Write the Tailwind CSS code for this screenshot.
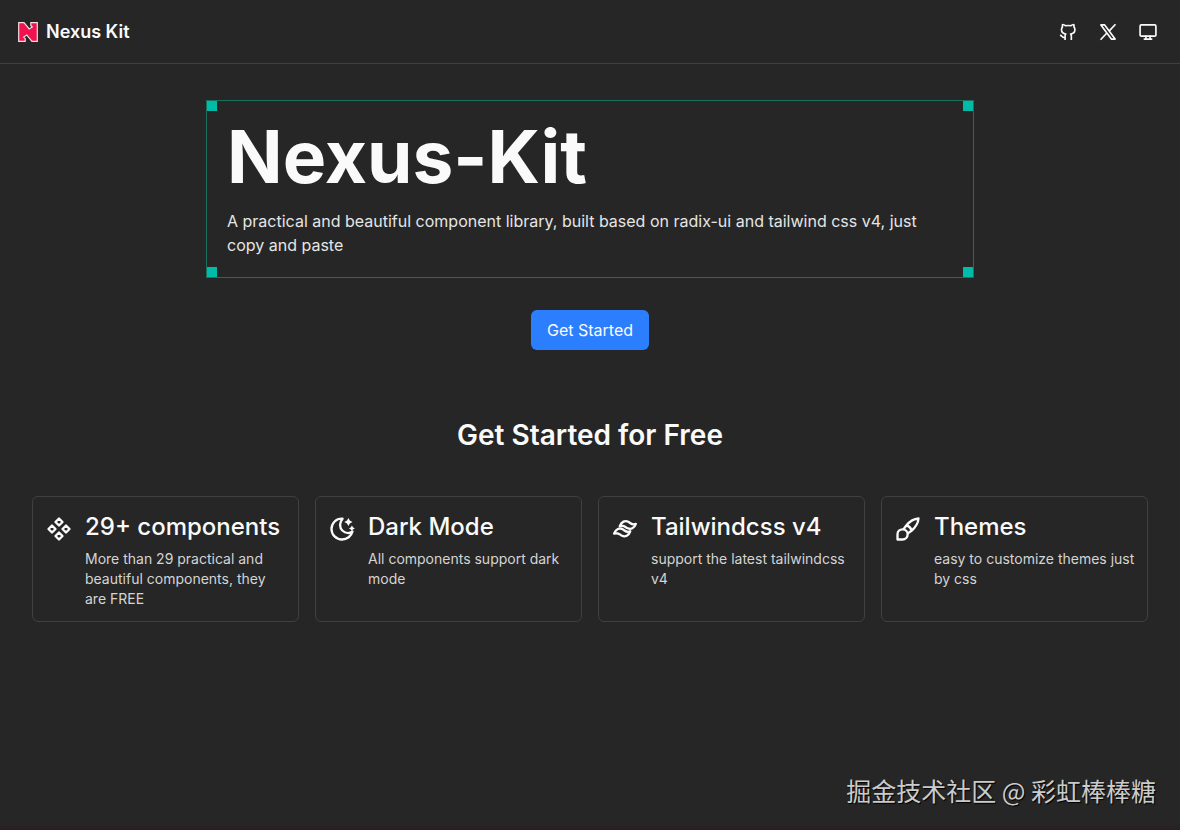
<!DOCTYPE html>
<html lang="en">
  <head>
    <meta charset="UTF-8" />
    <meta name="viewport" content="width=device-width, initial-scale=1.0" />
    <script src="https://cdn.jsdelivr.net/npm/@tailwindcss/browser@4"></script>
    <title>Nexus Kit</title>
  </head>

  <body
    class="relative min-h-screen flex flex-col bg-neutral-800 text-neutral-50 font-['Inter',sans-serif] antialiased border-b-4 border-[#291f25]"
  >
    <header
      class="flex h-16 items-center justify-between border-b border-neutral-700 pl-4 pr-3"
    >
      <a href="#" class="flex items-center gap-1.5 text-lg font-semibold">
        <svg class="size-6" viewBox="0 0 24 24">
          <path
            d="M2.7 2.7H8L13.200 9L16.300 7L14.800 5.500V2.7H21.3V21.3H16L10.800 15L7.700 17L9.200 18.500V21.3H2.7Z"
            fill="#f31250"
            stroke="#f6dce2"
            stroke-width="1.2"
          />
        </svg>
        Nexus Kit
      </a>
      <nav class="flex items-center">
        <a
          href="#"
          aria-label="GitHub"
          class="flex size-10 items-center justify-center"
        >
          <svg
            class="size-5"
            viewBox="0 0 24 24"
            fill="none"
            stroke="currentColor"
            stroke-width="2"
            stroke-linejoin="round"
          >
            <path
              d="M8.500 21.500V16.500C8.500 15.600 8.900 14.900 9.400 14.400C6 14 4.200 12.300 4.200 9C4.200 7.700 4.600 6.700 5.400 5.900C5.100 4.900 5.100 3.900 5.500 3C7 3.100 8.100 3.700 9.200 4.500C11 4.100 13.500 4.100 15.300 4.500C16.400 3.700 17.500 3.100 19 3C19.400 3.900 19.400 4.900 19.100 5.900C19.900 6.700 20.300 7.700 20.300 9C20.300 12.300 18.500 14 15.100 14.400C15.700 14.900 16 15.600 16 16.500V21.500M8.500 18.800C5 19.500 4.900 16.500 2.500 15.500"
            />
          </svg>
        </a>
        <a
          href="#"
          aria-label="X"
          class="flex size-10 items-center justify-center"
        >
          <svg
            class="size-5"
            viewBox="0 0 24 24"
            fill="none"
            stroke="currentColor"
            stroke-width="2"
          >
            <path d="M3.500 3.500H8L20.500 20.500H16Z" stroke-linejoin="round" />
            <path d="M21 2.700L13.300 11M10.700 13.200L3 21.300" />
          </svg>
        </a>
        <button
          type="button"
          aria-label="Theme"
          class="flex size-10 items-center justify-center"
        >
          <svg
            class="size-5"
            viewBox="0 0 24 24"
            fill="none"
            stroke="currentColor"
            stroke-width="2"
            stroke-linecap="round"
          >
            <rect x="2.500" y="3.500" width="19" height="13.500" rx="1.500" />
            <path d="M9.500 17V20M14.500 17V20M7.500 20.500H16.500" />
          </svg>
        </button>
      </nav>
    </header>

    <main class="px-8 pt-9">
      <section class="flex flex-col items-center">
        <div
          class="relative w-full max-w-3xl border border-[#1a705f] p-5"
        >
          <span class="absolute left-0 top-0 size-2.5 bg-[#00bba7]"></span>
          <span class="absolute right-0 top-0 size-2.5 bg-[#00bba7]"></span>
          <span class="absolute left-0 bottom-0 size-2.5 bg-[#00bba7]"></span>
          <span class="absolute right-0 bottom-0 size-2.5 bg-[#00bba7]"></span>
          <h1 class="mb-4 text-[73px] leading-[72px] font-bold">Nexus-Kit</h1>
          <p class="text-base text-neutral-200">
            A practical and beautiful component library, built based on radix-ui
            and tailwind css v4, just copy and paste
          </p>
        </div>
        <button
          type="button"
          class="mt-8 h-10 rounded-md bg-[#2b7fff] px-4 text-base"
        >
          Get Started
        </button>
      </section>

      <section class="pt-16">
        <h2 class="text-center text-[28px] leading-[42px] font-semibold">
          Get Started for Free
        </h2>
        <div class="mt-10 grid grid-cols-4 gap-4">
          <div class="flex gap-3 rounded-md border border-neutral-700 p-3">
            <svg
              class="mt-1.5 size-7 shrink-0"
              viewBox="0 0 24 24"
              fill="none"
              stroke="currentColor"
              stroke-width="2"
              stroke-linejoin="round"
            >
              <path
                d="M12 3L15 6L12 9L9 6ZM6 9L9 12L6 15L3 12ZM18 9L21 12L18 15L15 12ZM12 15L15 18L12 21L9 18Z"
              />
            </svg>
            <div>
              <h3 class="mb-1 text-2xl leading-9 font-medium">29+ components</h3>
              <p class="text-sm text-neutral-300">
                More than 29 practical and beautiful components, they are FREE
              </p>
            </div>
          </div>
          <div class="flex gap-3 rounded-md border border-neutral-700 p-3">
            <svg
              class="mt-1.5 size-7 shrink-0"
              viewBox="0 0 24 24"
              fill="none"
              stroke="currentColor"
              stroke-width="2"
              stroke-linejoin="round"
            >
              <path
                d="M12.500 3.200C7 2.800 3 7 3 12C3 17 7 21 12 21C16.300 21 20 18.200 21 14.200C18.500 16 15 15.800 12.500 13.500C9.600 10.800 9.600 6.600 12.500 3.200Z"
              />
              <path
                d="M17.500 2.500L18.700 4.800L21 6L18.700 7.200L17.500 9.500L16.300 7.200L14 6L16.300 4.800ZM20.500 9L21.400 10.600L23 11.500L21.400 12.400L20.500 14L19.600 12.400L18 11.500L19.600 10.600Z"
                fill="currentColor"
                stroke="none"
              />
            </svg>
            <div>
              <h3 class="mb-1 text-2xl leading-9 font-medium">Dark Mode</h3>
              <p class="text-sm text-neutral-300">
                All components support dark mode
              </p>
            </div>
          </div>
          <div class="flex gap-3 rounded-md border border-neutral-700 p-3">
            <svg
              class="mt-1.5 size-7 shrink-0"
              viewBox="0 0 24 24"
              fill="none"
              stroke="currentColor"
              stroke-width="2"
              stroke-linejoin="round"
            >
              <path
                d="M7.500 9.500C9 5.700 12 4.300 14.800 5.800C17 7 18 9.300 21.300 7.600C20 11.300 17 12.800 14.300 11.400C12 10.200 11 8.300 7.500 9.500Z"
              />
              <path
                d="M2.700 15.900C4.200 12.100 7.200 10.700 10 12.200C12.200 13.400 13.200 15.700 16.500 14C15.200 17.700 12.200 19.200 9.500 17.800C7.200 16.600 6.200 14.700 2.700 15.900Z"
              />
            </svg>
            <div>
              <h3 class="mb-1 text-2xl leading-9 font-medium">Tailwindcss v4</h3>
              <p class="text-sm text-neutral-300">
                support the latest tailwindcss v4
              </p>
            </div>
          </div>
          <div class="flex gap-3 rounded-md border border-neutral-700 p-3">
            <svg
              class="mt-1.5 size-7 shrink-0"
              viewBox="0 0 24 24"
              fill="none"
              stroke="currentColor"
              stroke-width="2"
              stroke-linejoin="round"
            >
              <path
                d="M3 21V16.500C3 13.800 5 12.300 7.300 12.300C9.800 12.300 11.700 14.200 11.700 16.500C11.700 19 9.800 21 7.300 21Z"
              />
              <path
                d="M8 12.400L10.500 9C13.500 5.500 16.800 3.300 21 3C20.700 7.200 18.500 10.500 15 13.500L11.600 16M10.500 9C12.900 9.500 14.500 11.100 15 13.500"
              />
            </svg>
            <div>
              <h3 class="mb-1 text-2xl leading-9 font-medium">Themes</h3>
              <p class="text-sm text-neutral-300">
                easy to customize themes just by css
              </p>
            </div>
          </div>
        </div>
      </section>
    </main>

    <p
      class="absolute right-6 bottom-4 text-[25px] leading-10 text-[#cbcbcb] font-['Noto_Sans_CJK_SC',sans-serif] text-shadow-[1px_1px_1px_#000000]"
      lang="zh"
    >
      掘金技术社区 @ 彩虹棒棒糖
    </p>
  </body>
</html>
